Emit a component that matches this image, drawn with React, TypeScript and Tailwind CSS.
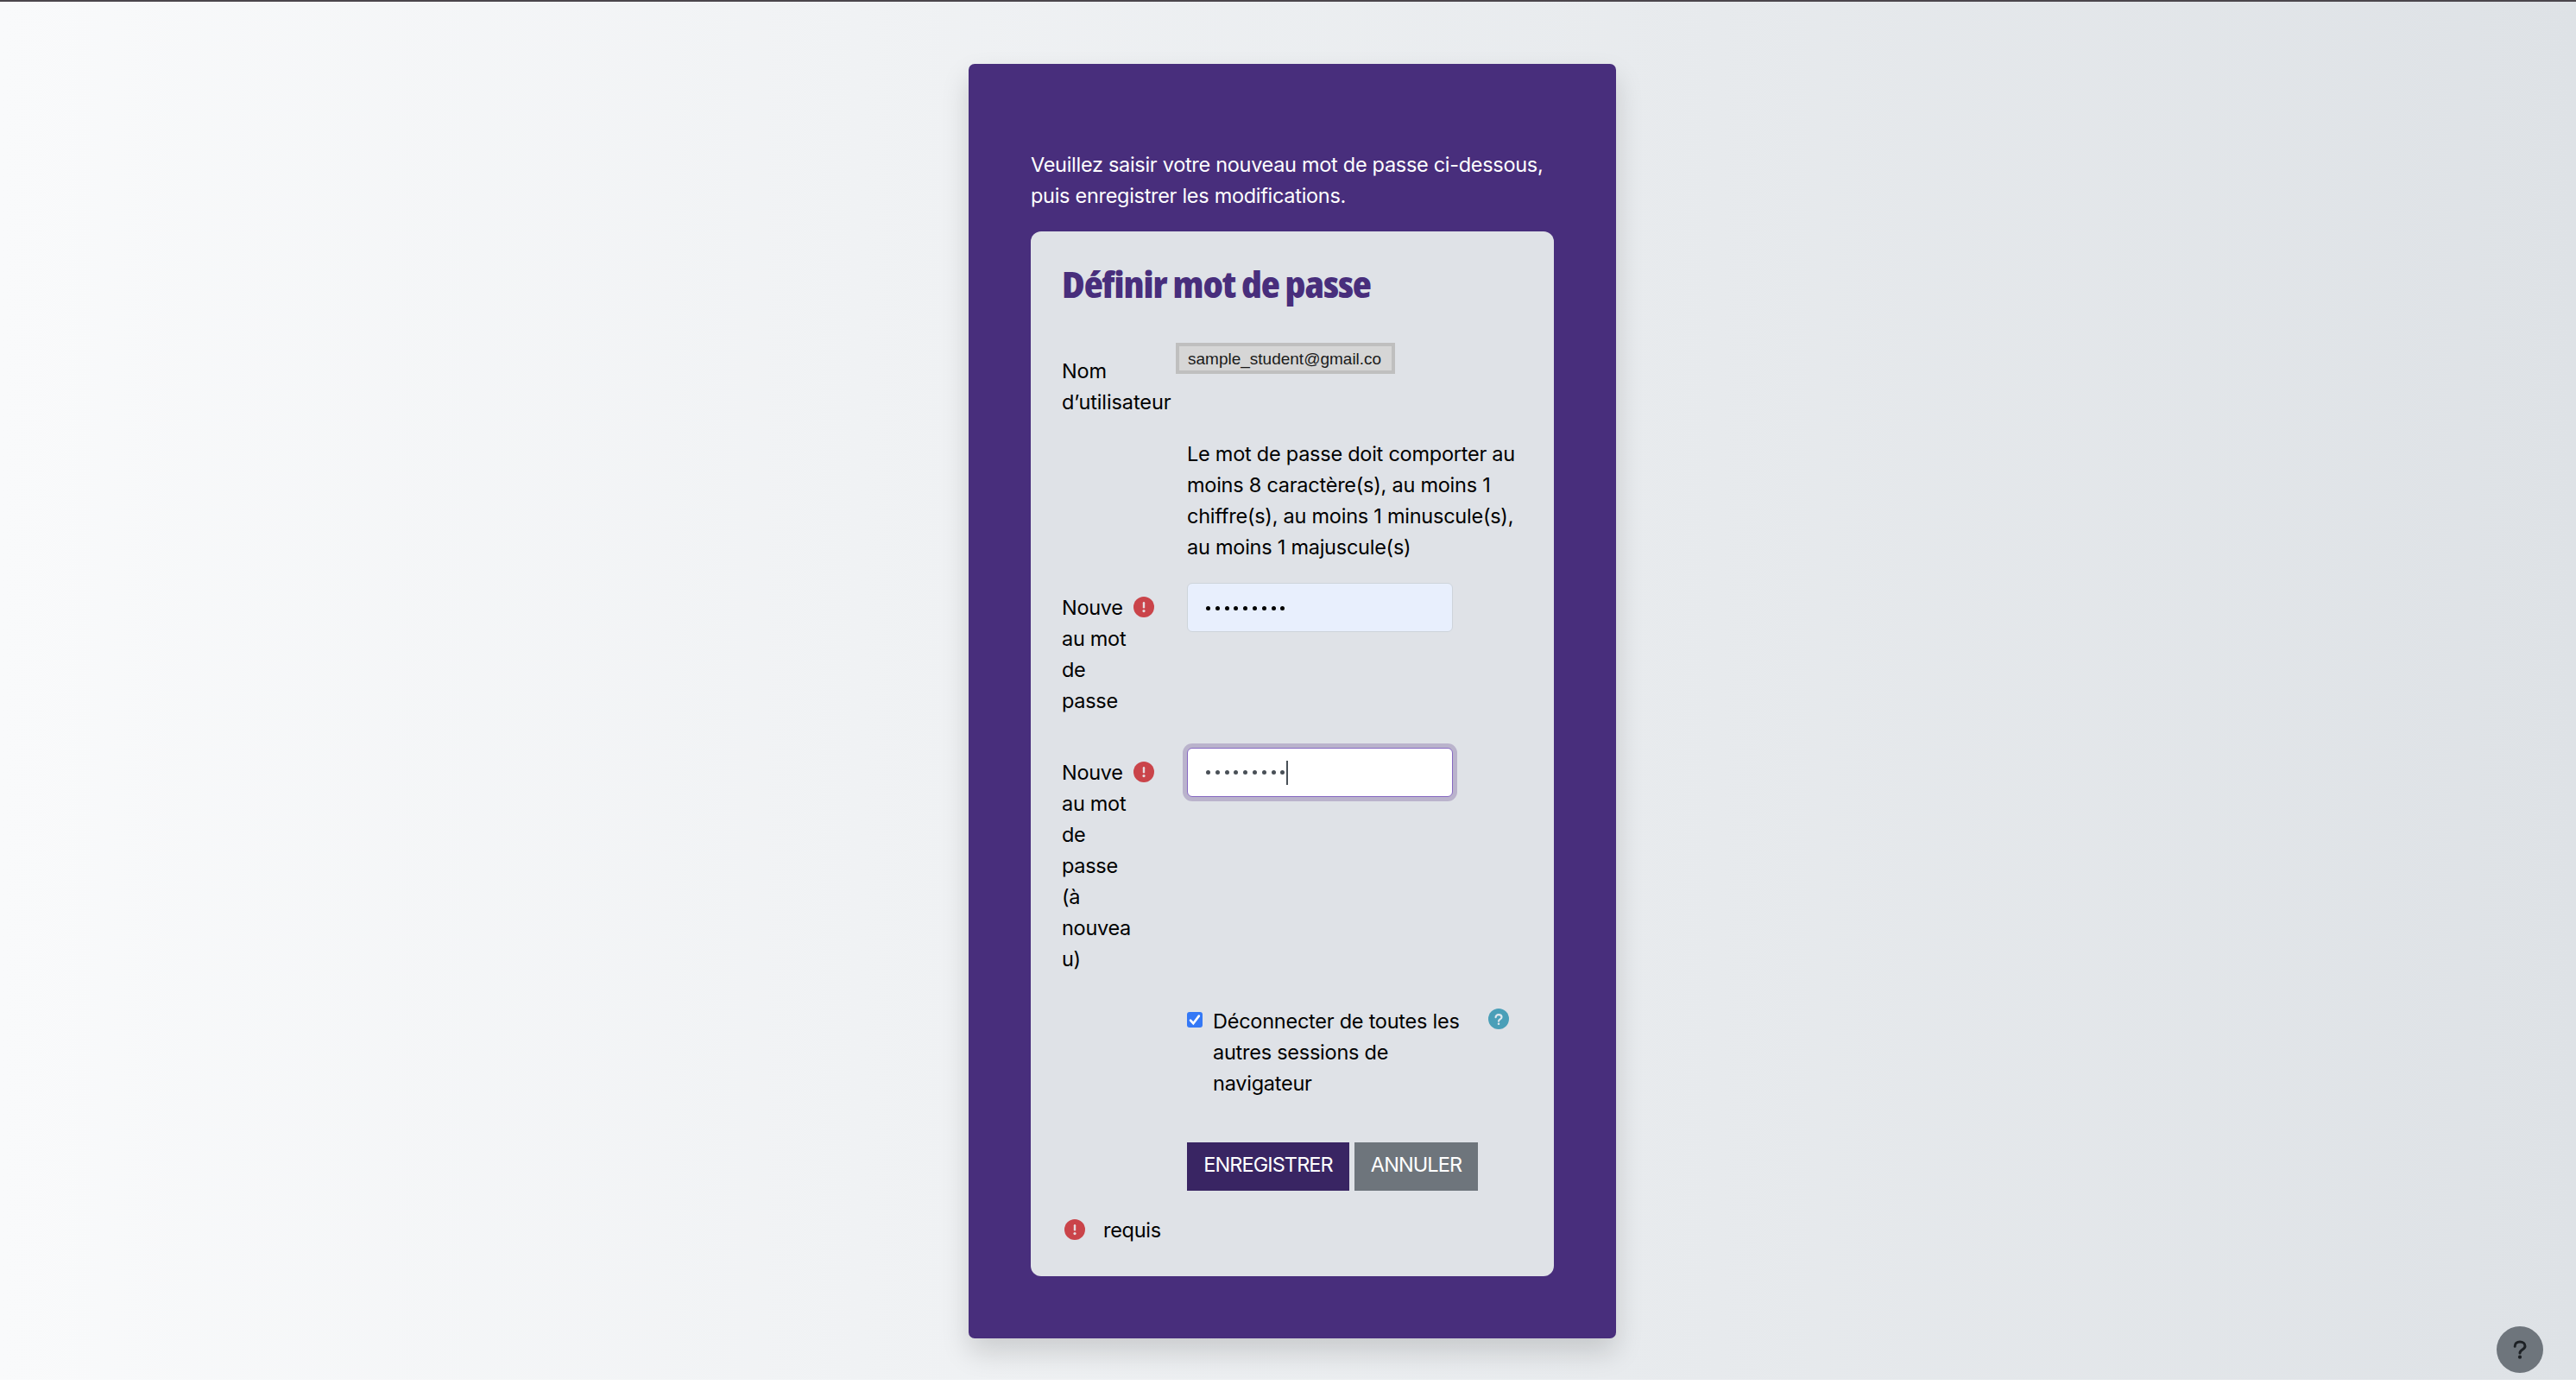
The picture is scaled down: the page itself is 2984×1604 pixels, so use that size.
import type { ReactNode } from 'react'

function RequiredIcon() {
  return (
    <svg viewBox="0 0 24 24" className="h-6 w-6 shrink-0" aria-hidden="true">
      <circle cx="12" cy="12" r="12" fill="#ca444a" />
      <path d="M12 7.2v5" stroke="#e6dde0" strokeWidth="2.4" strokeLinecap="round" />
      <circle cx="12" cy="16.6" r="1.6" fill="#e6dde0" />
    </svg>
  )
}

function QuestionMark({ className, strokeWidth = 3 }: { className?: string; strokeWidth?: number }) {
  return (
    <svg viewBox="0 0 16 22" fill="none" className={className} aria-hidden="true">
      <path
        d="M2.2 7.2C2.2 4 4.5 2 8 2s6 2 6 4.9c0 4.1-6 4-6 8"
        stroke="currentColor"
        strokeWidth={strokeWidth}
        strokeLinecap="round"
      />
      <circle cx="8" cy="19.7" r="2.1" fill="currentColor" />
    </svg>
  )
}

interface PasswordRowProps {
  labelLines: string[]
  children: ReactNode
}

function PasswordRow({ labelLines, children }: PasswordRowProps) {
  return (
    <div className="flex">
      <div className="mt-[11px] w-[83px] shrink-0">
        {labelLines.map((line) => (
          <span key={line} className="block whitespace-nowrap">
            {line}
          </span>
        ))}
      </div>
      <div className="mt-4 w-[62px] shrink-0">
        <RequiredIcon />
      </div>
      {children}
    </div>
  )
}

function Dots() {
  return (
    <span className="flex gap-[5.8px]">
      {Array.from({ length: 9 }, (_, i) => (
        <span key={i} className="h-[5px] w-[5px] rounded-full bg-current" />
      ))}
    </span>
  )
}

export default function App() {
  return (
    <div className="flex h-[1604px] w-[2984px] flex-col bg-white font-['Inter','Liberation_Sans',sans-serif] text-[23.5px] leading-9 tracking-[-0.3px] text-black">
      <div className="relative flex h-[1598px] flex-col items-center border-t-2 border-[#4b464c] bg-linear-[90deg,#f9fafb,#dee2e6] pt-[72px] pl-[10px]">
        <main className="h-[1476px] w-[750px] rounded-[7px] bg-[#482e7c] px-[72px] pt-[99px] shadow-[0_16px_32px_rgba(0,0,0,0.15)]">
          <p className="whitespace-nowrap text-white">
            Veuillez saisir votre nouveau mot de passe ci-dessous,
            <br />
            puis enregistrer les modifications.
          </p>

          <form className="mt-[23px] h-[1210px] rounded-xl bg-[#dfe2e7] px-9">
            <h1 className="h-[129px] origin-left scale-x-[1.06] pt-[34px] font-['Open_Sans',sans-serif] text-[43px] leading-[54px] font-extrabold tracking-[-1px] whitespace-nowrap text-[#482e7c] [font-stretch:75%]">
              Définir mot de passe
            </h1>

            <div className="flex">
              <div className="mt-[14px] w-[132px] shrink-0 pt-[1px] tracking-[-0.1px] whitespace-nowrap">
                Nom
                <br />
                d’utilisateur
              </div>
              <div className="flex h-9 w-[254px] items-center border-4 border-[#bfbfbf] bg-[#d6d6d6] pt-px pl-[10px] font-['Liberation_Sans',sans-serif] text-[19px] tracking-normal text-[#1a1a1a]">
                sample_student@gmail.co
              </div>
            </div>

            <p className="mt-6 ml-[145px] tracking-[-0.25px] whitespace-nowrap">
              Le mot de passe doit comporter au
              <br />
              moins 8 caractère(s), au moins 1
              <br />
              chiffre(s), au moins 1 minuscule(s),
              <br />
              au moins 1 majuscule(s)
            </p>

            <div className="mt-[23px]">
              <PasswordRow labelLines={['Nouve', 'au mot', 'de', 'passe']}>
                <div className="flex h-[57px] w-[308px] items-center rounded-md border border-[#ced4da] bg-[#e8effd] pt-0.5 pl-[21px]">
                  <Dots />
                </div>
              </PasswordRow>
            </div>

            <div className="mt-9">
              <PasswordRow labelLines={['Nouve', 'au mot', 'de', 'passe', '(à', 'nouvea', 'u)']}>
                <div className="flex h-[57px] w-[308px] items-center rounded-md border border-[#8668c2] bg-white pl-[21px] text-[#495057] shadow-[0_0_0_5px_#bab3cc]">
                  <Dots />
                  <span className="ml-[2px] h-7 w-0.5 bg-[#495057]" />
                </div>
              </PasswordRow>
            </div>

            <div className="mt-9 ml-[145px] flex">
              <span className="mt-[7px] flex h-[18px] w-[18px] shrink-0 items-center justify-center rounded-[3px] bg-[#3478f6]">
                <svg viewBox="0 0 18 18" className="h-[18px] w-[18px]" fill="none" aria-hidden="true">
                  <path d="M4 9.6 7.3 13.2 13.8 4.6" stroke="white" strokeWidth="2.6" strokeLinecap="round" />
                </svg>
              </span>
              <p className="ml-3 w-[319px] tracking-[-0.25px] whitespace-nowrap">
                Déconnecter de toutes les
                <br />
                autres sessions de
                <br />
                navigateur
              </p>
              <span className="mt-[3px] flex h-6 w-6 items-center justify-center rounded-full bg-[#4a9fb8] text-[#dfe8ee]">
                <QuestionMark className="h-[13px] w-[10px]" strokeWidth={3.6} />
              </span>
            </div>

            <div className="mt-[50px] ml-[145px] flex gap-1.5 text-white">
              <button type="button" className="h-14 w-[188px] bg-[#392563] pb-1 tracking-[-0.9px]">
                ENREGISTRER
              </button>
              <button type="button" className="h-14 w-[143px] bg-[#6e757c] pb-1 tracking-[-0.9px]">
                ANNULER
              </button>
            </div>

            <div className="mt-[27px] ml-[3px] flex">
              <div className="mt-[6px]">
                <RequiredIcon />
              </div>
              <span className="mt-px ml-[21px]">requis</span>
            </div>
          </form>
        </main>

        <button
          type="button"
          aria-label="Aide"
          className="absolute right-[38px] bottom-2 flex h-[54px] w-[54px] items-center justify-center rounded-full bg-[#6e757c] text-[#1d2125]"
        >
          <QuestionMark className="h-[22px] w-4" />
        </button>
      </div>
    </div>
  )
}
